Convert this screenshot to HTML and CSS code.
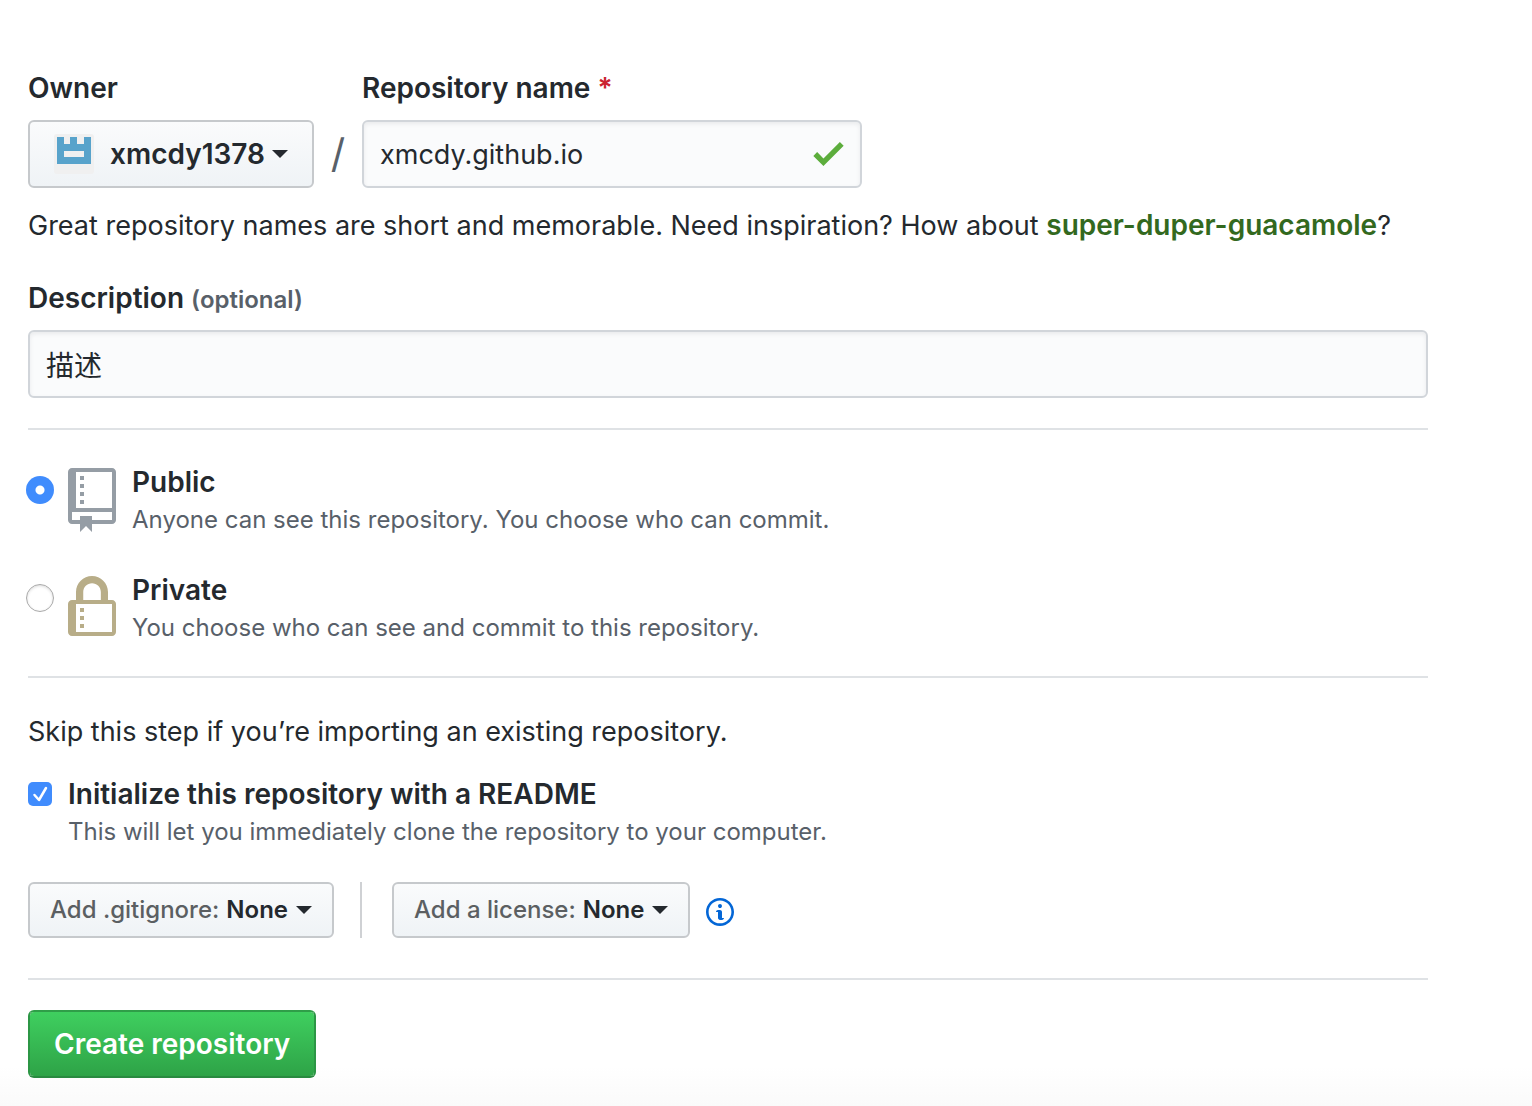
FILE: index.html
```html
<!DOCTYPE html>
<html lang="en">
<head>
<meta charset="utf-8">
<meta name="viewport" content="width=device-width, initial-scale=1">
<title>Create a new repository</title>
<link rel="stylesheet" href="styles.css">
</head>
<body>
<main>
<form class="form">
  <div class="identity">
    <div class="field">
      <label class="label" for="owner">Owner</label>
      <button class="btn btn-owner" id="owner" type="button" aria-haspopup="menu">
        <svg class="avatar" viewBox="0 0 40 40" aria-hidden="true"><rect width="40" height="40" rx="3" fill="#f0f0f0"/><path fill="#58a3cb" fill-rule="evenodd" d="M3 3h7v7h6V3h7v7h7V3h7v27H3zM10 17v6h20v-6z"/></svg>
        <span>xmcdy1378</span>
        <span class="caret"></span>
      </button>
    </div>
    <span class="slash">/</span>
    <div class="field">
      <label class="label" for="name">Repository name <span class="required">*</span></label>
      <div class="name-box">
        <input class="input input-name" id="name" type="text" value="xmcdy.github.io">
        <svg class="check" viewBox="0 3.5 12 9.5" aria-hidden="true"><path fill="#5cad3c" d="M12 5l-8 8-4-4 1.5-1.5L4 10l6.5-6.5z"/></svg>
      </div>
    </div>
  </div>
  <p class="text hint">Great repository names are short and memorable. Need inspiration? How about <strong class="suggestion">super-duper-guacamole</strong>?</p>
  <div class="field description">
    <label class="label" for="description">Description <span class="optional">(optional)</span></label>
    <input class="input" id="description" type="text" value="描述">
  </div>

  <hr>

  <div class="options">
    <div class="option">
      <input class="radio" type="radio" name="visibility" id="public" checked>
      <svg class="kind kind-public" viewBox="0 0 12 16" aria-hidden="true"><path d="M4 9H3V8h1v1zm0-3H3v1h1V6zm0-2H3v1h1V4zm0-2H3v1h1V2zm8-1v12c0 .55-.45 1-1 1H6v2l-1.5-1.5L3 16v-2H1c-.55 0-1-.45-1-1V1c0-.55.45-1 1-1h10c.55 0 1 .45 1 1zm-1 10H1v2h2v-1h3v1h5v-2zm0-10H2v9h9V1z"/></svg>
      <div class="copy">
        <label class="label" for="public">Public</label>
        <p class="note">Anyone can see this repository. You choose who can commit.</p>
      </div>
    </div>
    <div class="option">
      <input class="radio" type="radio" name="visibility" id="private">
      <svg class="kind kind-private" viewBox="0 0 12 16" aria-hidden="true"><path d="M4 13H3v-1h1v1zm8-6v7c0 .55-.45 1-1 1H1c-.55 0-1-.45-1-1V7c0-.55.45-1 1-1h1V4c0-2.2 1.8-4 4-4s4 1.8 4 4v2h1c.55 0 1 .45 1 1zM3.8 6h4.41V4c0-1.22-.98-2.2-2.2-2.2-1.22 0-2.2.98-2.2 2.2v2H3.8zM11 7H2v7h9V7zM4 8H3v1h1V8zm0 2H3v1h1v-1z"/></svg>
      <div class="copy">
        <label class="label" for="private">Private</label>
        <p class="note">You choose who can see and commit to this repository.</p>
      </div>
    </div>
  </div>

  <hr>

  <p class="text skip">Skip this step if you’re importing an existing repository.</p>
  <div class="readme">
    <input class="checkbox" type="checkbox" id="readme" checked>
    <div class="copy">
      <label class="label" for="readme">Initialize this repository with a README</label>
      <p class="note">This will let you immediately clone the repository to your computer.</p>
    </div>
  </div>
  <div class="extras">
    <button class="btn btn-small" type="button" aria-haspopup="menu"><span class="btn-key">Add .gitignore:</span> <span>None</span> <span class="caret"></span></button>
    <span class="divider"></span>
    <button class="btn btn-small" type="button" aria-haspopup="menu"><span class="btn-key">Add a license:</span> <span>None</span> <span class="caret"></span></button>
    <svg class="info" viewBox="0 0 14 16" role="img" aria-label="About licenses"><path d="M6.3 5.69a.942.942 0 0 1-.28-.7c0-.28.09-.52.28-.7.19-.18.42-.28.7-.28.28 0 .52.09.7.28.18.19.28.42.28.7 0 .28-.09.52-.28.7a1 1 0 0 1-.7.3c-.28 0-.52-.11-.7-.3zM8 7.99c-.02-.25-.11-.48-.31-.69-.2-.19-.42-.3-.69-.31H6c-.27.02-.48.13-.69.31-.2.2-.3.44-.31.69h1v3c.02.27.11.5.31.69.2.2.42.31.69.31h1c.27 0 .48-.11.69-.31.2-.19.3-.42.31-.69H8V7.98v.01zM7 2.3c-3.14 0-5.7 2.54-5.7 5.68 0 3.14 2.56 5.7 5.7 5.7s5.7-2.55 5.7-5.7c0-3.15-2.56-5.69-5.7-5.69v.01zM7 .98c3.86 0 7 3.14 7 7s-3.14 7-7 7-7-3.12-7-7 3.14-7 7-7z"/></svg>
  </div>

  <hr>

  <button class="btn btn-primary" type="submit">Create repository</button>
</form>
</main>
</body>
</html>
```
FILE: styles.css
```css
* {
  box-sizing: border-box;
}

body {
  margin: 0;
  color: #24292e;
  background: #fff;
  font-family: Inter, "Noto Sans CJK SC", sans-serif;
  font-size: 28px;
  line-height: 42px;
}

main {
  padding: 67px 28px 28px;
  background: linear-gradient(to top, #fafafa, #fff 40px);
}

.form {
  max-width: 1400px;
}

p {
  margin: 0;
}

hr {
  height: 2px;
  margin: 30px 0;
  border: 0;
  background: #dfe2e5;
}

.label {
  font-weight: 600;
}

.text {
  font-size: 27px;
}

.field {
  display: flex;
  flex-direction: column;
  align-items: flex-start;
  gap: 11px;
}

.identity {
  display: flex;
  align-items: flex-end;
}

.slash {
  width: 48px;
  color: #586069;
  font-size: 40px;
  line-height: 68px;
  text-align: center;
}

.required {
  color: #cb2431;
}

.name-box {
  position: relative;
  width: 500px;
}

.input {
  display: block;
  width: 100%;
  height: 68px;
  padding: 0 16px;
  border: 2px solid #d1d5da;
  border-radius: 6px;
  color: #24292e;
  background: #fafbfc;
  box-shadow: inset 0 2px 4px rgba(27, 31, 35, 0.075);
  font: inherit;
}

.input-name {
  font-size: 27px;
}

.check {
  position: absolute;
  top: 22px;
  right: 18px;
  width: 31px;
  height: 24px;
}

.hint {
  margin-top: 17px;
}

.suggestion {
  color: #33691e;
  font-size: 28px;
  font-weight: 600;
  line-height: 1;
}

.description {
  margin-top: 30px;
}

.optional {
  color: #586069;
  font-size: 24px;
  line-height: 1;
}

.options {
  display: grid;
  gap: 31px;
  padding-bottom: 1px;
}

.option {
  display: flex;
  align-items: flex-start;
}

.radio {
  appearance: none;
  flex: none;
  width: 28px;
  height: 28px;
  margin: 16px 14px 0 -2px;
  border: 1px solid #aaa;
  border-radius: 50%;
  background: #fff;
  box-shadow: inset 0 1px 3px rgba(0, 0, 0, 0.15);
}

.radio:checked {
  border: 0;
  background: radial-gradient(circle, #fff 4px, #408cfd 5px);
  box-shadow: none;
}

.kind {
  flex: none;
  width: 48px;
  height: 64px;
  margin: 8px 16px 0 0;
}

.kind-public {
  fill: #959da5;
}

.kind-private {
  fill: #b8ad88;
}

.copy {
  display: grid;
  padding-top: 1px;
}

.note {
  color: #586069;
  font-size: 24px;
  line-height: 34px;
}

.skip {
  margin-top: 33px;
}

.readme {
  display: flex;
  align-items: flex-start;
  gap: 16px;
  margin-top: 19px;
}

.checkbox {
  appearance: none;
  flex: none;
  width: 24px;
  height: 24px;
  margin: 10px 0 0;
  border-radius: 5px;
  background: #408cfd url("data:image/svg+xml,%3Csvg xmlns='http://www.w3.org/2000/svg' viewBox='0 0 24 24'%3E%3Cpath d='M6.500 13l4.500 5 7-12' fill='none' stroke='%23fff' stroke-width='2.500' stroke-linecap='round' stroke-linejoin='round'/%3E%3C/svg%3E");
}

.extras {
  display: flex;
  align-items: center;
  margin-top: 33px;
  margin-bottom: 40px;
}

.btn {
  display: inline-flex;
  align-items: center;
  justify-content: center;
  height: 68px;
  padding: 0 24px;
  border: 2px solid #c6c9cc;
  border-radius: 6px;
  color: #24292e;
  background: linear-gradient(#fafbfc, #eff3f6);
  font: inherit;
  font-weight: 600;
  white-space: nowrap;
}

.btn-owner {
  width: 286px;
}

.avatar {
  width: 40px;
  height: 40px;
  margin-right: 16px;
}

.caret {
  margin-left: 7px;
  border: 8px solid transparent;
  border-top-color: currentColor;
  border-bottom: 0;
}

.btn-small {
  gap: 7px;
  height: 56px;
  padding: 0 20px;
  font-size: 24px;
}

.btn-small .caret {
  margin-left: 1px;
}

.btn-key {
  color: #5b5f62;
  font-weight: 500;
}

.divider {
  width: 2px;
  height: 56px;
  margin: 0 30px 0 26px;
  background: #cfd1d4;
}

.info {
  width: 28px;
  height: 32px;
  margin: 4px 0 0 16px;
  fill: #0366d6;
}

.btn-primary {
  border-color: #2f9e48 #2c9645 #298a40;
  color: #fff;
  background: linear-gradient(#3fcf5f, #2ea347) padding-box;
}
```
